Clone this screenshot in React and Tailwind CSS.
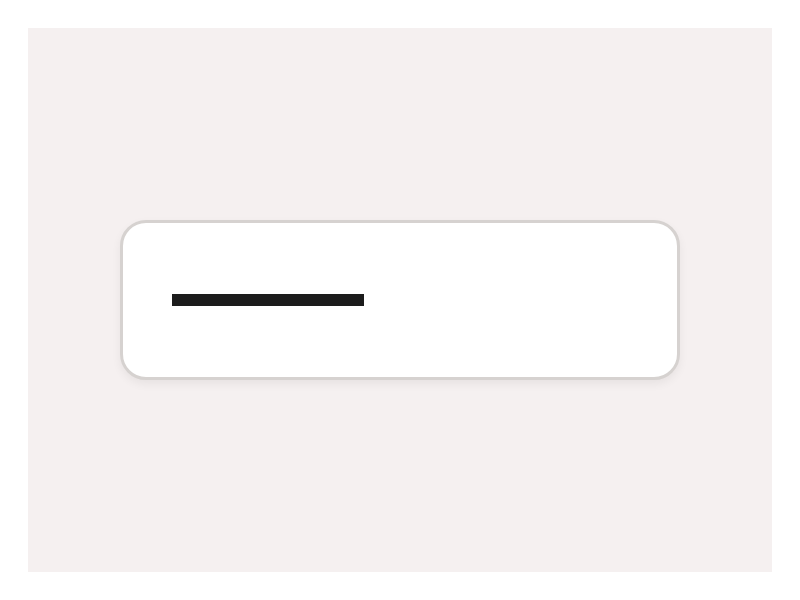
export default function App() {
  return (
    <div className="w-[800px] h-[600px] bg-white p-[28px]">
      <div className="w-full h-full bg-[#f5f0f0] flex items-center justify-center">
        <div className="w-[560px] h-[160px] bg-white border-[3px] border-[#d6d2d0] rounded-[26px] shadow-[0_4px_10px_rgba(0,0,0,0.06)] flex items-center pl-[49px]">
          <div className="w-[192px] h-[12px] bg-[#1c1c1c]" />
        </div>
      </div>
    </div>
  );
}
